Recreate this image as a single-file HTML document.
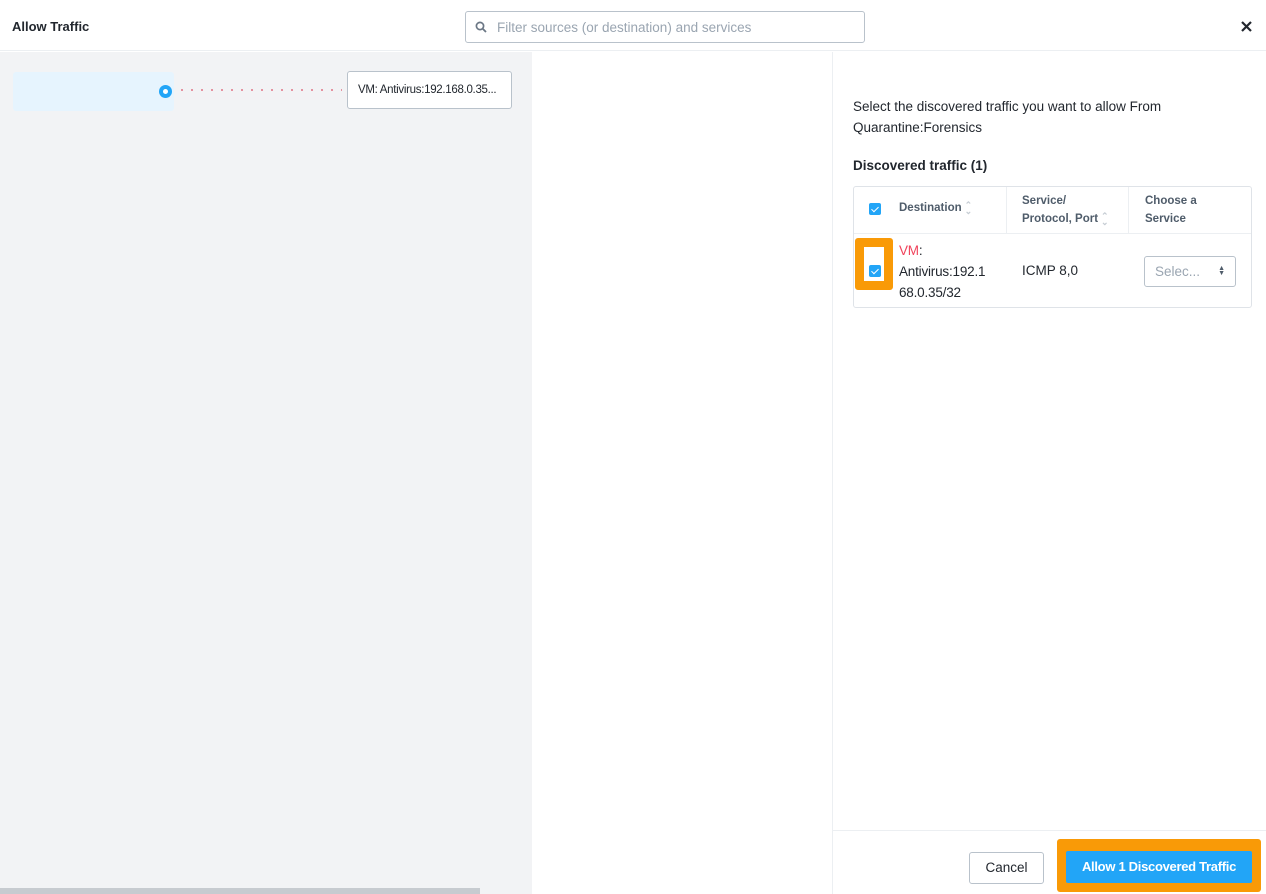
<!DOCTYPE html>
<html><head><style>
*{box-sizing:border-box;margin:0;padding:0}
body{width:1266px;height:894px;position:relative;overflow:hidden;font-family:"Liberation Sans",sans-serif;background:#fff;color:#22272e}
.a{position:absolute}
.cb{position:absolute;width:12px;height:12px;background:#22a5f7;border-radius:2px}
.cb:after{content:"";position:absolute;left:4px;top:1.5px;width:3px;height:6px;border:solid #fff;border-width:0 1.6px 1.6px 0;transform:rotate(45deg)}
.sort{display:inline-block;color:#c5ccd3;font-size:9px;line-height:6px;vertical-align:middle;margin-left:3px}
</style></head><body>
<div class="a" style="left:0;top:0;width:1266px;height:51px;border-bottom:1px solid #eceff2"></div>
<div class="a" style="left:12px;top:19px;font-size:13px;font-weight:bold">Allow Traffic</div>
<div class="a" style="left:465px;top:11px;width:400px;height:32px;border:1px solid #b9c2cb;border-radius:3px"></div>
<svg class="a" style="left:475px;top:21px" width="12" height="12" viewBox="0 0 12 12"><circle cx="5" cy="5" r="3.6" fill="none" stroke="#6b7785" stroke-width="1.7"/><path d="M7.6 7.6L11 11" stroke="#6b7785" stroke-width="1.8"/></svg>
<div class="a" style="left:497px;top:20px;font-size:13.5px;color:#9aa5b1">Filter sources (or destination) and services</div>
<svg class="a" style="left:1241px;top:21px" width="11" height="11" viewBox="0 0 11 11"><path d="M1 1L10 10M10 1L1 10" stroke="#22272e" stroke-width="2.2"/></svg>
<div class="a" style="left:0;top:52px;width:532px;height:842px;background:#f2f3f5"></div>
<div class="a" style="left:13px;top:72px;width:161px;height:39px;background:#e6f4fe;border-radius:3px"></div>
<div class="a" style="left:159px;top:85px;width:13px;height:13px;border-radius:50%;background:#22a5f7"><div class="a" style="left:4px;top:4px;width:5px;height:5px;border-radius:50%;background:#fff"></div></div>
<div class="a" style="left:177px;top:89px;width:165px;height:2px;background:radial-gradient(circle,#e07a8a 0.9px,transparent 1.1px) 0 0/10px 2px repeat-x"></div>
<div class="a" style="left:347px;top:71px;width:165px;height:38px;background:#fff;border:1px solid #b9c2cb;border-radius:3px;font-size:11.5px;padding:12px 0 0 10px;white-space:nowrap;letter-spacing:-0.3px">VM: Antivirus:192.168.0.35...</div>
<div class="a" style="left:0;top:888px;width:480px;height:6px;background:#c7cbd0"></div>
<div class="a" style="left:832px;top:52px;width:1px;height:842px;background:#eceff2"></div>
<div class="a" style="left:853px;top:96px;font-size:13.5px;line-height:21px">Select the discovered traffic you want to allow From<br>Quarantine:Forensics</div>
<div class="a" style="left:853px;top:158px;font-size:13.5px;font-weight:bold">Discovered traffic (1)</div>
<div class="a" style="left:853px;top:186px;width:399px;height:122px;border:1px solid #dfe3e8;border-radius:3px"></div>
<div class="a" style="left:854px;top:233px;width:397px;height:1px;background:#eceff2"></div>
<div class="a" style="left:1006px;top:187px;width:1px;height:46px;background:#eceff2"></div>
<div class="a" style="left:1128px;top:187px;width:1px;height:46px;background:#eceff2"></div>
<div class="cb" style="left:869px;top:203px"></div>
<div class="a" style="left:899px;top:202px;font-size:11.5px;color:#4f5c6a;font-weight:bold">Destination<span class="sort">⌃<br>⌄</span></div>
<div class="a" style="left:1022px;top:192px;font-size:11.5px;line-height:18px;color:#4f5c6a;font-weight:bold">Service/<br>Protocol, Port<span class="sort">⌃<br>⌄</span></div>
<div class="a" style="left:1145px;top:192px;font-size:11.5px;line-height:18px;color:#4f5c6a;font-weight:bold">Choose a<br>Service</div>
<div class="a" style="left:855px;top:238px;width:38px;height:52px;border:9px solid #f99a07;border-radius:3px;background:#fff"></div>
<div class="cb" style="left:869px;top:265px"></div>
<div class="a" style="left:899px;top:240px;font-size:13.5px;line-height:21px;letter-spacing:-0.2px"><span style="color:#f0435b">VM</span>:<br>Antivirus:192.1<br>68.0.35/32</div>
<div class="a" style="left:1022px;top:263px;font-size:13.5px">ICMP 8,0</div>
<div class="a" style="left:1144px;top:256px;width:92px;height:31px;border:1px solid #b9c2cb;border-radius:3px;font-size:13.5px;color:#9aa5b1;padding:7px 0 0 10px">Selec...<span style="position:absolute;right:10px;top:9px;font-size:7px;line-height:5px;color:#4f5c6a">▲<br>▼</span></div>
<div class="a" style="left:833px;top:830px;width:433px;height:1px;background:#eceff2"></div>
<div class="a" style="left:969px;top:852px;width:75px;height:32px;border:1px solid #b9c2cb;border-radius:3px;font-size:13.5px;text-align:center;line-height:30px">Cancel</div>
<div class="a" style="left:1057px;top:839px;width:204px;height:53px;background:#f99a07;border-radius:3px"></div>
<div class="a" style="left:1066px;top:851px;width:186px;height:32px;background:#22a5f7;border-radius:2px;color:#fff;font-size:13px;font-weight:bold;text-align:center;line-height:32px;letter-spacing:-0.3px">Allow 1 Discovered Traffic</div>
</body></html>
